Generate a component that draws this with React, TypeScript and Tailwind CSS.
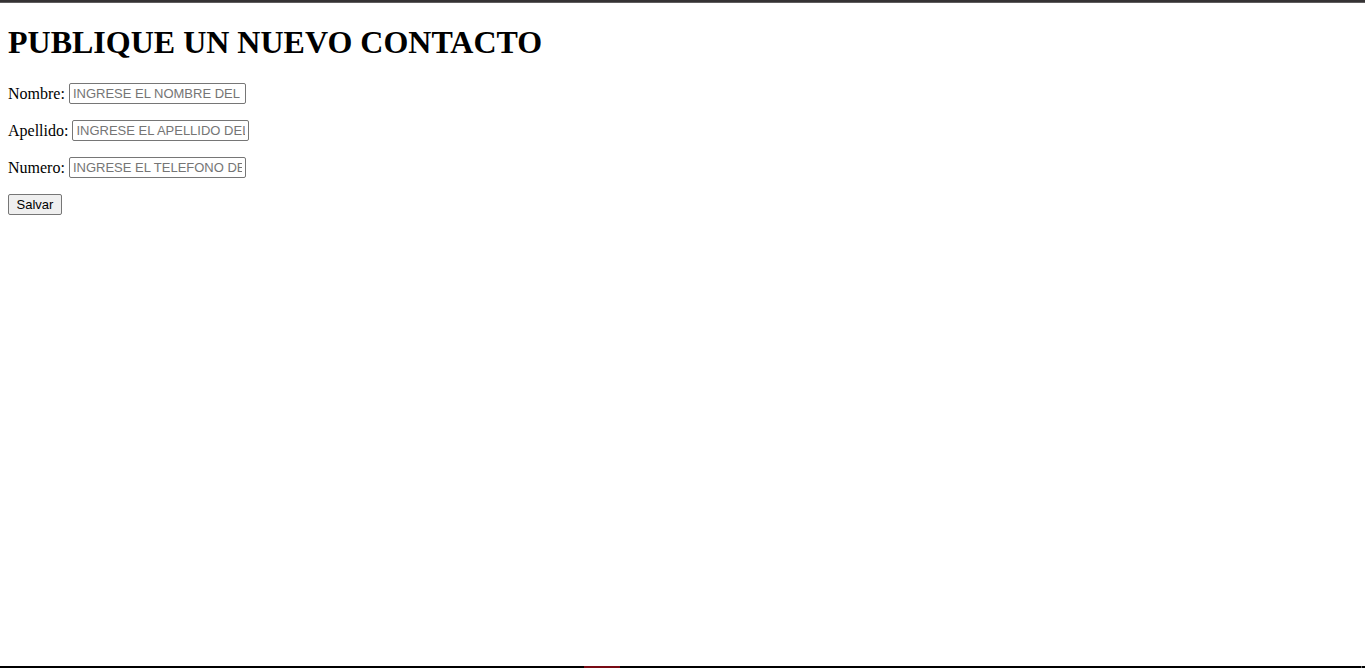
import { useState } from "react";

const fields = [
  { id: "nombre", label: "Nombre:", placeholder: "INGRESE EL NOMBRE DEL CONTACTO" },
  { id: "apellido", label: "Apellido:", placeholder: "INGRESE EL APELLIDO DEL CONTACTO" },
  { id: "numero", label: "Numero:", placeholder: "INGRESE EL TELEFONO DEL CONTACTO" },
];

export default function App() {
  const [values, setValues] = useState<Record<string, string>>({});

  return (
    <div className="flex min-h-screen flex-col bg-white font-['Liberation_Serif',serif] text-base text-black">
      <div className="h-[3px] border-b border-[#5f5d5e] bg-[#353334]" />
      <main className="grow px-2 pt-[21px]">
        <h1 className="text-[32px] leading-9 font-bold">PUBLIQUE UN NUEVO CONTACTO</h1>
        <form className="mt-[23px] flex flex-col items-start gap-4" onSubmit={(e) => e.preventDefault()}>
          {fields.map((field) => (
            <div key={field.id} className="flex items-center gap-1">
              <label htmlFor={field.id} className="leading-5">
                {field.label}
              </label>
              <input
                id={field.id}
                name={field.id}
                type="text"
                placeholder={field.placeholder}
                value={values[field.id] ?? ""}
                onChange={(e) => setValues({ ...values, [field.id]: e.target.value })}
                className="h-[21px] w-[177px] rounded-[2px] border border-[#767676] bg-white px-[3px] font-['Liberation_Sans',sans-serif] text-[13px] placeholder:text-[#757575]"
              />
            </div>
          ))}
          <button
            type="submit"
            className="h-[21px] min-w-[54px] rounded-[2px] border border-[#767676] bg-[#efefef] px-1.5 font-['Liberation_Sans',sans-serif] text-[13px] leading-4"
          >
            Salvar
          </button>
        </form>
      </main>
      <div className="grid h-0.5 grid-cols-[584fr_36px_741fr_1px_3px] bg-black">
        <div className="col-start-2 bg-[#780a14]" />
        <div className="col-start-4 bg-[#6b6b6b]" />
      </div>
    </div>
  );
}
